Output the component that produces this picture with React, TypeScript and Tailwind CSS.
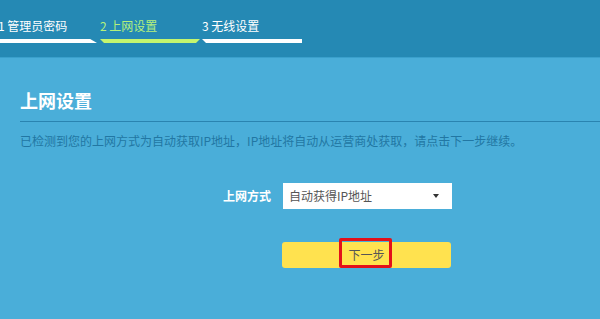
import React from "react";

export default function App() {
  const font = { fontFamily: '"Microsoft YaHei", "Noto Sans CJK SC", sans-serif' };
  return (
    <div className="w-[600px] h-[319px] bg-[#4aaed9] overflow-hidden" style={font}>
      <div className="h-[58px] bg-[#2589b4] border-b border-[#3aa0cc] relative">
        <div className="flex pt-[18px]">
          <div className="w-[100px] flex flex-col">
            <div className="text-[12px] leading-[16px] text-white -ml-[2px] whitespace-nowrap">1 管理员密码</div>
            <div className="mt-[5px] h-[4px] w-[97px] bg-white [clip-path:polygon(0_0,93%_0,100%_100%,0_100%)]" />
          </div>
          <div className="w-[102px] flex flex-col">
            <div className="text-[12px] leading-[16px] text-[#b4f07c]">2 上网设置</div>
            <div className="mt-[5px] h-[4px] w-[100px] bg-[#c4f56e] [clip-path:polygon(0_0,100%_0,96%_100%,4%_100%)]" />
          </div>
          <div className="w-[102px] flex flex-col">
            <div className="text-[12px] leading-[16px] text-white">3 无线设置</div>
            <div className="mt-[5px] h-[4px] w-[100px] bg-white [clip-path:polygon(0_0,100%_0,100%_100%,4%_100%)]" />
          </div>
        </div>
      </div>
      <div className="pl-[20px]">
        <div className="pt-[30px] text-[18px] leading-[24px] font-bold text-white">上网设置</div>
        <div className="mt-[9px] h-px bg-[#2a84b0]" />
        <div className="mt-[11px] text-[12px] leading-[16px] text-[#2277a3]">
          已检测到您的上网方式为自动获取IP地址，IP地址将自动从运营商处获取，请点击下一步继续。
        </div>
      </div>
      <div className="mt-[34px] flex items-center">
        <div className="w-[283px] text-right pr-[12px] text-[12px] font-bold text-white">上网方式</div>
        <div className="w-[169px] h-[26px] bg-white flex items-center justify-between pl-[6px] pr-[13px] text-[12px] text-[#555]">
          <span>自动获得IP地址</span>
          <span className="w-0 h-0 border-l-[3px] border-r-[3px] border-t-[4px] border-l-transparent border-r-transparent border-t-[#333]" />
        </div>
      </div>
      <div className="mt-[33px] ml-[282px] w-[169px] h-[26px] bg-[#ffe24f] rounded-[3px] relative flex items-center justify-center">
        <div className="absolute left-[57px] top-[-4px] w-[53px] h-[30px] border-[3px] border-[#e3101a] rounded-[2px]" />
        <span className="text-[12px] text-[#555] relative">下一步</span>
      </div>
    </div>
  );
}
